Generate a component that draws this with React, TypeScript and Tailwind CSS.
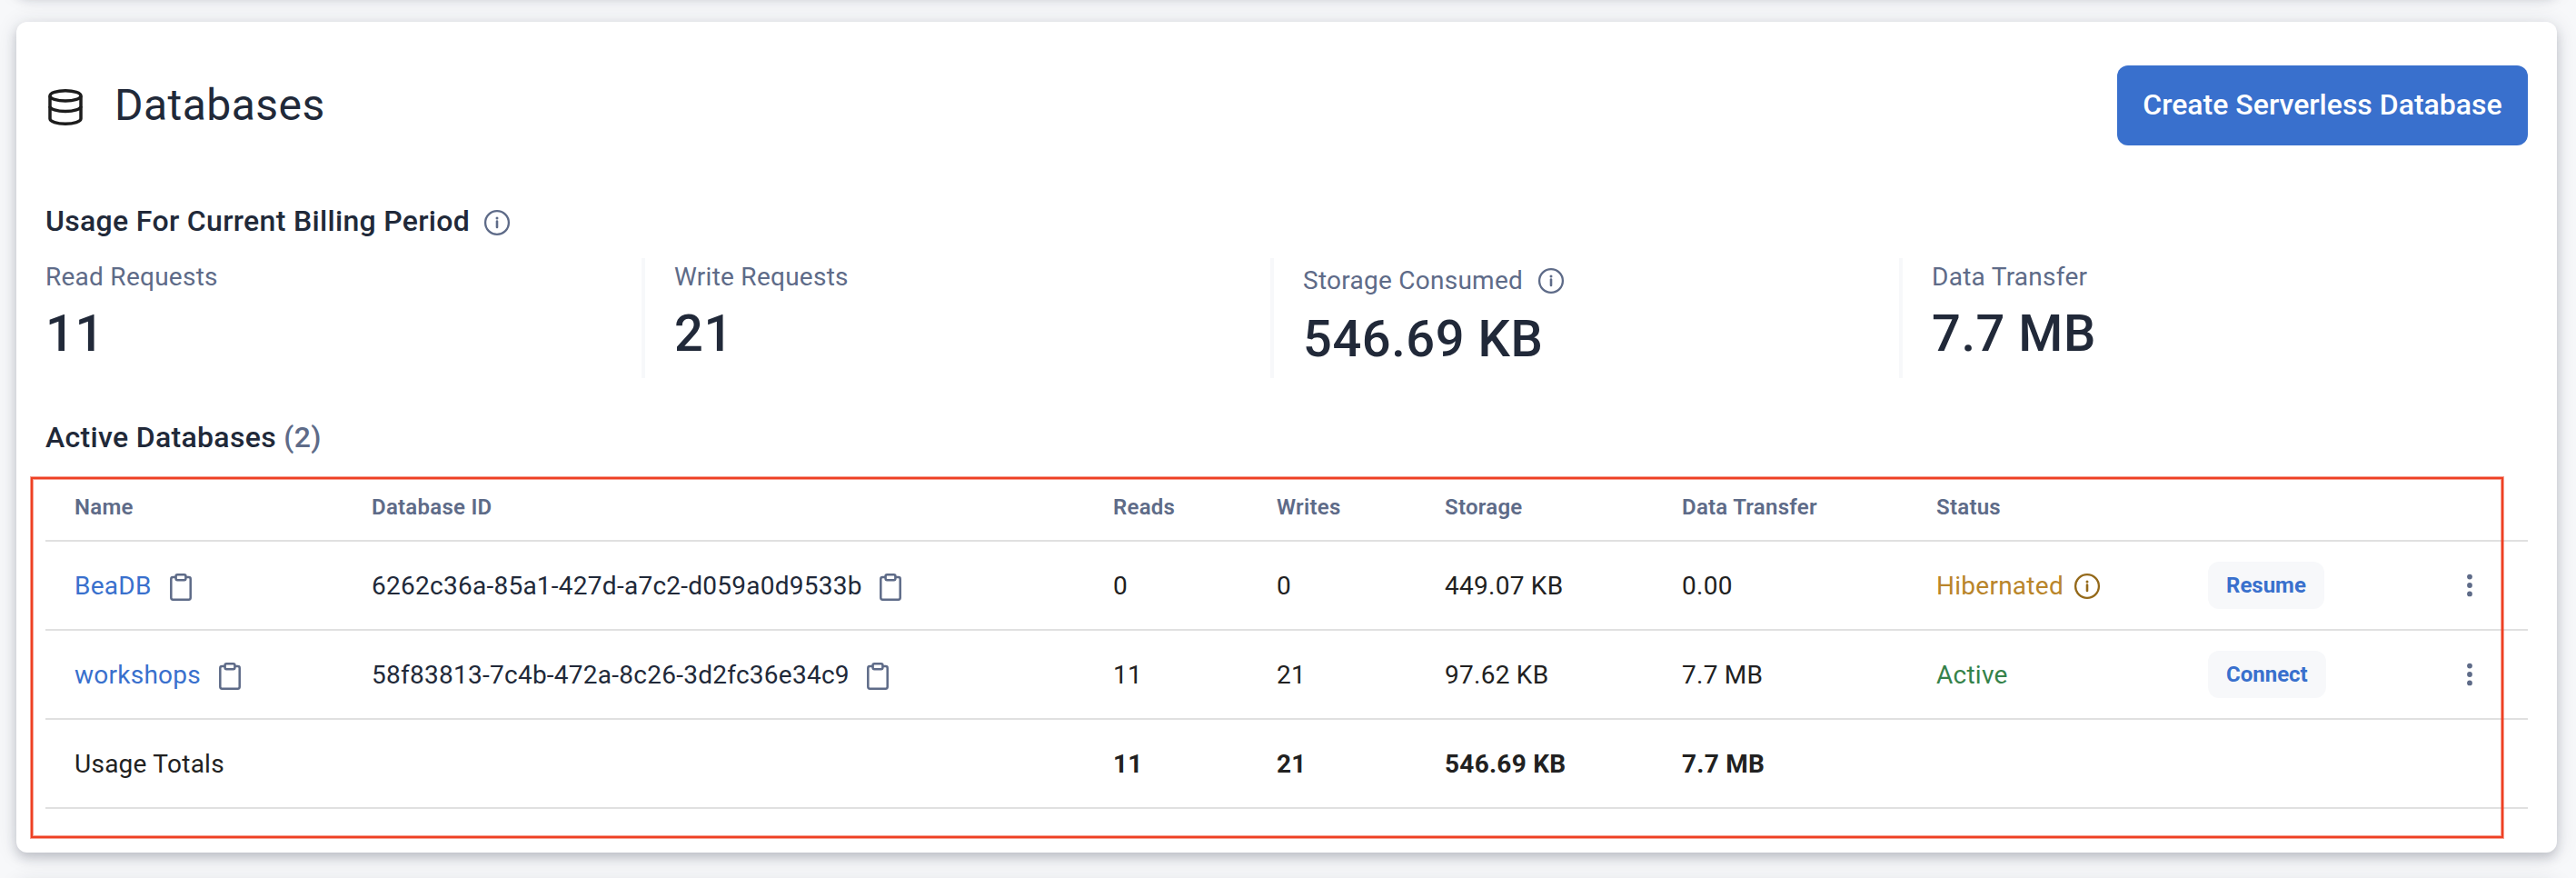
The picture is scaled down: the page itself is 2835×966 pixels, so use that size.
import type { ReactNode } from "react";

type Database = {
  name: string;
  id: string;
  reads: string;
  writes: string;
  storage: string;
  transfer: string;
  status: "Hibernated" | "Active";
  action: string;
};

const databases: Database[] = [
  {
    name: "BeaDB",
    id: "6262c36a-85a1-427d-a7c2-d059a0d9533b",
    reads: "0",
    writes: "0",
    storage: "449.07 KB",
    transfer: "0.00",
    status: "Hibernated",
    action: "Resume",
  },
  {
    name: "workshops",
    id: "58f83813-7c4b-472a-8c26-3d2fc36e34c9",
    reads: "11",
    writes: "21",
    storage: "97.62 KB",
    transfer: "7.7 MB",
    status: "Active",
    action: "Connect",
  },
];

function DatabaseIcon() {
  return (
    <svg className="mt-1 size-11 shrink-0 text-[#1c1c1c]" viewBox="0 0 44 44" fill="none" stroke="currentColor" strokeWidth="3.5">
      <ellipse cx="22" cy="9.4" rx="17" ry="5.6" />
      <path d="M5 9.4V34.6C5 37.8 12.6 40.3 22 40.3S39 37.8 39 34.6V9.4" />
      <path d="M5 21C5 24.1 12.6 26.6 22 26.6S39 24.1 39 21" />
    </svg>
  );
}

function InfoIcon({ className = "" }: { className?: string }) {
  return (
    <svg className={`size-8 shrink-0 ${className}`} viewBox="0 0 32 32" fill="none" stroke="currentColor">
      <circle cx="16" cy="16" r="12.9" strokeWidth="2.3" />
      <path d="M16 14.6V21" strokeWidth="2.6" strokeLinecap="round" />
      <circle cx="16" cy="10.9" r="1.5" fill="currentColor" stroke="none" />
    </svg>
  );
}

function ClipboardIcon() {
  return (
    <svg className="mt-0.5 h-[30px] w-6 shrink-0 text-[#5e6b88]" viewBox="0 0 24 30" fill="none" stroke="currentColor" strokeWidth="2.5" strokeLinejoin="round">
      <path d="M6 4H3.3C2.1 4 1.3 4.8 1.3 6V26.6C1.3 27.8 2.1 28.7 3.3 28.7H20.7C21.9 28.7 22.7 27.8 22.7 26.6V6C22.7 4.8 21.9 4 20.7 4H18" />
      <rect x="6.6" y="1.3" width="10.8" height="5.9" rx="1.6" />
    </svg>
  );
}

function KebabIcon() {
  return (
    <svg className="mx-auto block h-8 w-8 text-[#5e6b88]" viewBox="0 0 32 32" fill="currentColor">
      <circle cx="16" cy="6.6" r="2.9" />
      <circle cx="16" cy="16" r="2.9" />
      <circle cx="16" cy="25.4" r="2.9" />
    </svg>
  );
}

function Stat({ label, value, info = false, divider = true }: { label: string; value: string; info?: boolean; divider?: boolean }) {
  return (
    <div className={divider ? "border-l-4 border-[#f7f8fa] pl-8" : ""}>
      <div className={`flex items-center gap-[15px] text-[28px] leading-8 text-[#5e6b88] ${info ? "h-[46px] pt-1" : "h-10 pt-0.5"}`}>
        {label}
        {info && <InfoIcon />}
      </div>
      <div className="mt-2.5 text-[56px] leading-[66px] font-medium tracking-[0.56px] text-[#212939]">{value}</div>
    </div>
  );
}

function Th({ children }: { children?: ReactNode }) {
  return (
    <th className="h-[74px] border-b-2 border-[#e0e0e0] px-8 py-0 text-left text-2xl leading-8 font-semibold text-[#5e6b88]">
      {children}
    </th>
  );
}

function Td({ children, className = "px-8 pt-0.5 pb-0" }: { children?: ReactNode; className?: string }) {
  return <td className={`h-[98px] border-b-2 border-[#e0e0e0] ${className}`}>{children}</td>;
}

const cardShadow = "rounded-xl bg-white shadow-[0_6px_12px_rgba(35,40,60,0.2),0_2px_24px_rgba(35,40,60,0.12)]";

export default function App() {
  return (
    <div className="h-[966px] w-[2835px] overflow-hidden bg-[#f7f8fa] font-['Roboto',sans-serif] tracking-[0.26px]">
      <div className="-mt-[72px] flex flex-col gap-8 pr-[21px] pl-[18px]">
        <div className={`h-16 shrink-0 ${cardShadow}`} />
        <section className={`relative h-[914px] shrink-0 px-8 pt-12 ${cardShadow}`}>
          <header className="flex h-[88px] items-center justify-between">
            <div className="flex items-center gap-8">
              <DatabaseIcon />
              <h1 className="text-5xl leading-[56px] font-normal tracking-[0.48px] text-[#212939]">Databases</h1>
            </div>
            <button className="h-[88px] w-[452px] rounded-xl bg-[#3970cd] pb-0.5 text-[32px] leading-10 font-medium tracking-normal whitespace-nowrap text-white">
              Create Serverless Database
            </button>
          </header>

          <h2 className="mt-[67px] flex h-8 items-center gap-[14px] text-[32px] leading-8 font-medium tracking-[0.32px] text-[#212939]">
            Usage For Current Billing Period
            <InfoIcon className="mt-1 text-[#5e6b88]" />
          </h2>
          <div className="mt-[25px] grid h-[132px] grid-cols-[656px_692px_692px_1fr]">
            <Stat label="Read Requests" value="11" divider={false} />
            <Stat label="Write Requests" value="21" />
            <Stat label="Storage Consumed" value="546.69 KB" info />
            <Stat label="Data Transfer" value="7.7 MB" />
          </div>

          <h2 className="mt-[49px] text-[32px] leading-8 font-medium tracking-[0.32px] text-[#212939]">
            Active Databases <span className="text-[#5e6b88]">(2)</span>
          </h2>
          <table className="mt-[25px] w-[2732px] table-fixed border-separate border-spacing-0 text-[28px] leading-8">
            <colgroup>
              <col className="w-[327px]" />
              <col className="w-[816px]" />
              <col className="w-[180px]" />
              <col className="w-[185px]" />
              <col className="w-[261px]" />
              <col className="w-[280px]" />
              <col className="w-[299px]" />
              <col className="w-[256px]" />
              <col className="w-[128px]" />
            </colgroup>
            <thead>
              <tr>
                <Th>Name</Th>
                <Th>Database ID</Th>
                <Th>Reads</Th>
                <Th>Writes</Th>
                <Th>Storage</Th>
                <Th>Data Transfer</Th>
                <Th>Status</Th>
                <Th />
                <Th />
              </tr>
            </thead>
            <tbody className="text-[#212121]">
              {databases.map((db) => (
                <tr key={db.id}>
                  <Td>
                    <div className="flex items-center gap-5 text-[#3970cd]">
                      {db.name}
                      <ClipboardIcon />
                    </div>
                  </Td>
                  <Td>
                    <div className="flex items-center gap-[19px] text-[#212939]">
                      {db.id}
                      <ClipboardIcon />
                    </div>
                  </Td>
                  <Td>{db.reads}</Td>
                  <Td>{db.writes}</Td>
                  <Td>{db.storage}</Td>
                  <Td>{db.transfer}</Td>
                  <Td>
                    {db.status === "Hibernated" ? (
                      <div className="flex items-center gap-2.5 text-[#b9852a]">
                        {db.status}
                        <InfoIcon className="text-[#94691a]" />
                      </div>
                    ) : (
                      <span className="text-[#35824a]">{db.status}</span>
                    )}
                  </Td>
                  <Td className="px-8 py-0">
                    <button className="block h-[52px] rounded-xl bg-[#f7f8fa] px-5 text-2xl leading-8 font-bold tracking-normal text-[#3970cd]">
                      {db.action}
                    </button>
                  </Td>
                  <Td className="p-0">
                    <KebabIcon />
                  </Td>
                </tr>
              ))}
              <tr className="font-bold">
                <Td>
                  <span className="font-normal">Usage Totals</span>
                </Td>
                <Td />
                <Td>11</Td>
                <Td>21</Td>
                <Td>546.69 KB</Td>
                <Td>7.7 MB</Td>
                <Td />
                <Td />
                <Td />
              </tr>
            </tbody>
          </table>

          {/* Highlight frame laid over the table */}
          <div className="pointer-events-none absolute top-[501px] left-4 h-[397px] w-[2721px] border-2 border-[#ee4023] shadow-[0_0_0_1px_rgba(238,64,35,0.5),inset_0_0_0_1px_rgba(238,64,35,0.5)]" />
        </section>
        <div className={`h-16 shrink-0 ${cardShadow}`} />
      </div>
    </div>
  );
}
